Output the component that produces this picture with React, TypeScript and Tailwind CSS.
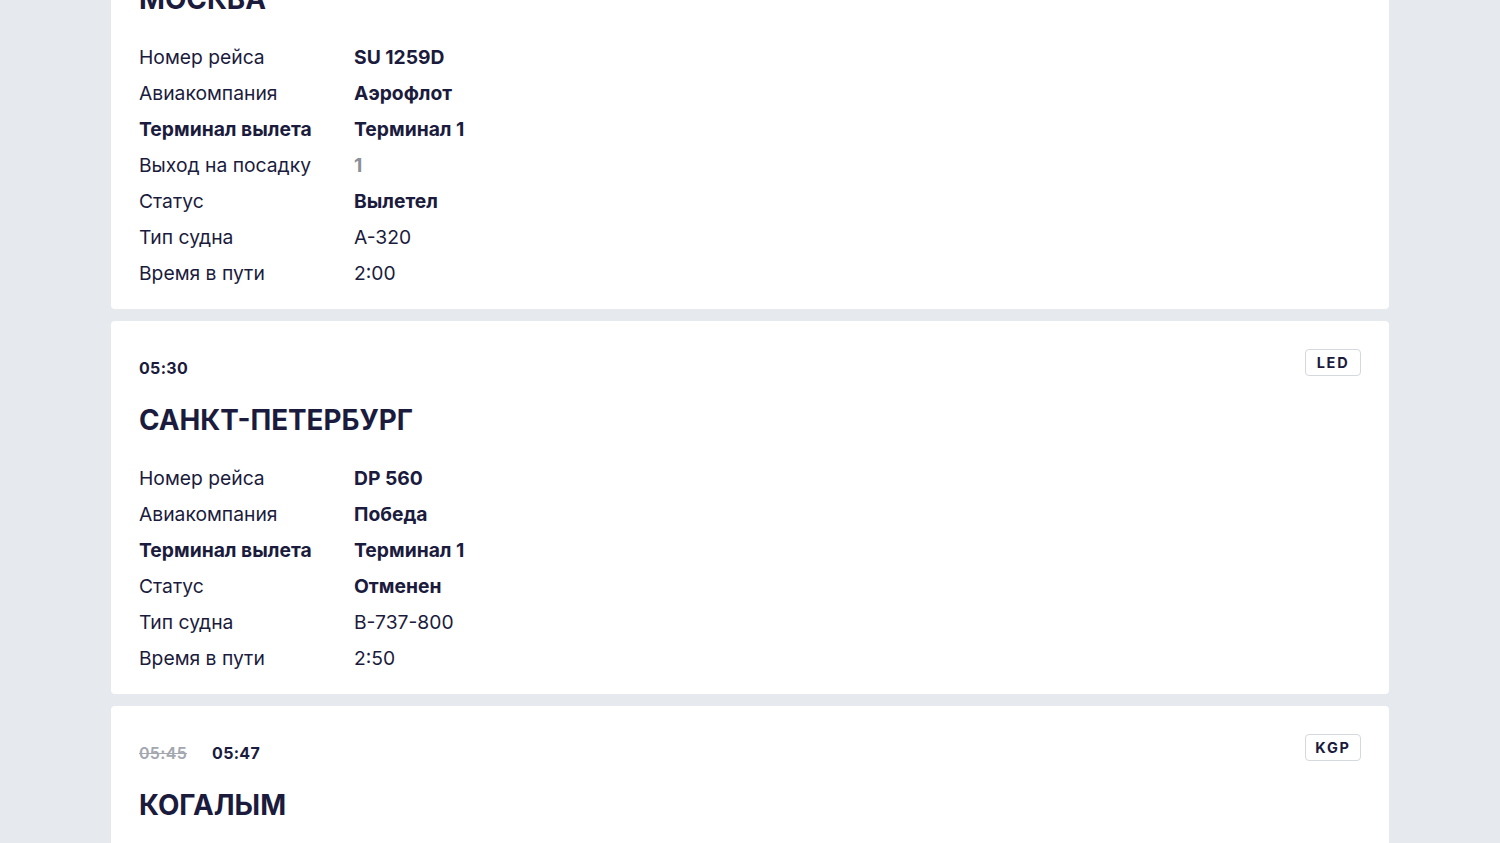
import React from 'react';

type Row = { label: string; value: string; labelBold?: boolean; valueStyle?: 'bold' | 'muted' | 'normal' };

interface Flight {
  time: string;
  oldTime?: string;
  city: string;
  code?: string;
  rows: Row[];
}

const flights: Flight[] = [
  {
    time: '05:20',
    city: 'МОСКВА',
    code: 'SVO',
    rows: [
      { label: 'Номер рейса', value: 'SU 1259D', valueStyle: 'bold' },
      { label: 'Авиакомпания', value: 'Аэрофлот', valueStyle: 'bold' },
      { label: 'Терминал вылета', value: 'Терминал 1', labelBold: true, valueStyle: 'bold' },
      { label: 'Выход на посадку', value: '1', valueStyle: 'muted' },
      { label: 'Статус', value: 'Вылетел', valueStyle: 'bold' },
      { label: 'Тип судна', value: 'A-320' },
      { label: 'Время в пути', value: '2:00' },
    ],
  },
  {
    time: '05:30',
    city: 'САНКТ-ПЕТЕРБУРГ',
    code: 'LED',
    rows: [
      { label: 'Номер рейса', value: 'DP 560', valueStyle: 'bold' },
      { label: 'Авиакомпания', value: 'Победа', valueStyle: 'bold' },
      { label: 'Терминал вылета', value: 'Терминал 1', labelBold: true, valueStyle: 'bold' },
      { label: 'Статус', value: 'Отменен', valueStyle: 'bold' },
      { label: 'Тип судна', value: 'B-737-800' },
      { label: 'Время в пути', value: '2:50' },
    ],
  },
  {
    oldTime: '05:45',
    time: '05:47',
    city: 'КОГАЛЫМ',
    code: 'KGP',
    rows: [
      { label: 'Номер рейса', value: 'UT 107', valueStyle: 'bold' },
      { label: 'Авиакомпания', value: 'ЮТэйр', valueStyle: 'bold' },
    ],
  },
];

function FlightCard({ flight }: { flight: Flight }) {
  return (
    <div className="bg-white rounded-[4px] px-7 pt-7 pb-[18px]">
      {/* Time & airport code */}
      <div className="flex items-start justify-between h-[27px]">
        <div className="flex items-center gap-[25px] pt-[9px] text-[16px] font-bold leading-5 tracking-[0.02em]">
          {flight.oldTime && <span className="text-[#a3a7b0] line-through font-semibold">{flight.oldTime}</span>}
          <span>{flight.time}</span>
        </div>
        {flight.code && (
          <span className="border border-[#d5d8dd] rounded-[4px] h-[27px] w-14 flex items-center justify-center text-[14.5px] font-bold tracking-[0.12em]">
            {flight.code}
          </span>
        )}
      </div>

      <h2 className="mt-[28px] text-[27.8px] font-bold leading-8">{flight.city}</h2>

      {/* Details */}
      <div className="mt-[24px] flex flex-col">
        {flight.rows.map((r) => (
          <div key={r.label} className="flex h-9 items-center text-[19.3px] leading-6">
            <span className={`w-[215px] shrink-0 ${r.labelBold ? 'font-bold' : ''}`}>{r.label}</span>
            <span
              className={
                r.valueStyle === 'bold'
                  ? 'font-bold'
                  : r.valueStyle === 'muted'
                  ? 'font-bold text-[#8a8f98]'
                  : ''
              }
            >
              {r.value}
            </span>
          </div>
        ))}
      </div>
    </div>
  );
}

export default function App() {
  return (
    <div
      className="min-h-screen bg-[#e6e9ed] text-[#1b1b3d] overflow-hidden"
      style={{ fontFamily: 'Inter, "Noto Sans", sans-serif' }}
    >
      <div className="w-[1278px] mx-auto -mt-[100px] flex flex-col gap-3">
        {flights.map((f) => (
          <FlightCard key={f.city} flight={f} />
        ))}
      </div>
    </div>
  );
}
